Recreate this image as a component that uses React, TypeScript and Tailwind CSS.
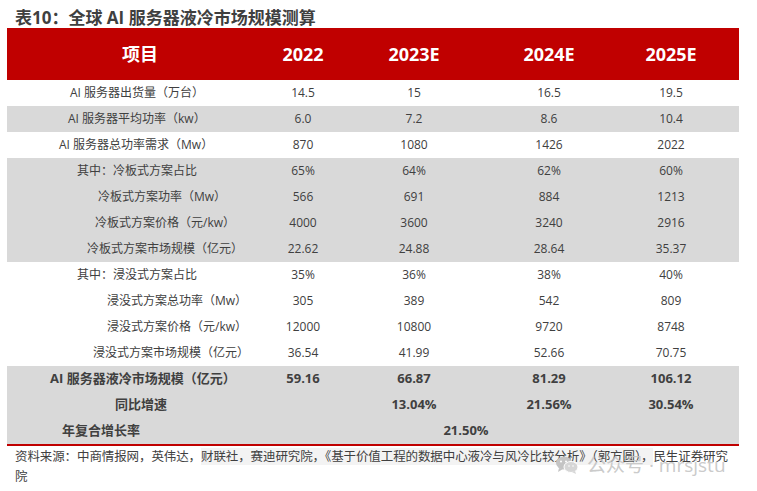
const rows: { label: string; pl: string; vals: string[]; bg: boolean; bold?: boolean }[] = [
  { label: "AI 服务器出货量（万台）", pl: "pl-[63px]", vals: ["14.5", "15", "16.5", "19.5"], bg: false },
  { label: "AI 服务器平均功率（kw）", pl: "pl-[61px]", vals: ["6.0", "7.2", "8.6", "10.4"], bg: true },
  { label: "AI 服务器总功率需求（Mw）", pl: "pl-[52px]", vals: ["870", "1080", "1426", "2022"], bg: false },
  { label: "其中：冷板式方案占比", pl: "pl-[70px]", vals: ["65%", "64%", "62%", "60%"], bg: true },
  { label: "冷板式方案功率（Mw）", pl: "pl-[91px]", vals: ["566", "691", "884", "1213"], bg: true },
  { label: "冷板式方案价格（元/kw）", pl: "pl-[88px]", vals: ["4000", "3600", "3240", "2916"], bg: true },
  { label: "冷板式方案市场规模（亿元）", pl: "pl-[80px]", vals: ["22.62", "24.88", "28.64", "35.37"], bg: true },
  { label: "其中：浸没式方案占比", pl: "pl-[70px]", vals: ["35%", "36%", "38%", "40%"], bg: false },
  { label: "浸没式方案总功率（Mw）", pl: "pl-[100px]", vals: ["305", "389", "542", "809"], bg: false },
  { label: "浸没式方案价格（元/kw）", pl: "pl-[100px]", vals: ["12000", "10800", "9720", "8748"], bg: false },
  { label: "浸没式方案市场规模（亿元）", pl: "pl-[86px]", vals: ["36.54", "41.99", "52.66", "70.75"], bg: false },
  { label: "AI 服务器液冷市场规模（亿元）", pl: "pl-[43px]", vals: ["59.16", "66.87", "81.29", "106.12"], bg: true, bold: true },
  { label: "同比增速", pl: "pl-[108px]", vals: ["", "13.04%", "21.56%", "30.54%"], bg: true, bold: true },
];

function WeChatIcon() {
  return (
    <svg width="24" height="20" viewBox="0 0 24 20" fill="none">
      <ellipse cx="9" cy="8" rx="8" ry="6.5" fill="#c4c4c4" />
      <path d="M4 13 L3 17 L8 14 Z" fill="#c4c4c4" />
      <ellipse cx="16" cy="12" rx="7" ry="5.5" fill="#d6d6d6" stroke="#fff" strokeWidth="1" />
      <path d="M20 16 L21 19 L17 17 Z" fill="#d6d6d6" />
      <circle cx="6" cy="6.5" r="1" fill="#fff" />
      <circle cx="11" cy="6.5" r="1" fill="#fff" />
      <circle cx="14" cy="11" r="0.8" fill="#fff" />
      <circle cx="18" cy="11" r="0.8" fill="#fff" />
    </svg>
  );
}

export default function App() {
  return (
    <div
      className="relative w-[757px] h-[491px] bg-white text-[#404040]"
      style={{ fontFamily: '"Open Sans", "Noto Sans CJK SC", sans-serif' }}
    >
      <div className="h-[28px] pt-[7px] pl-[15px] flex items-center text-[17px] font-bold text-[#3f3f3f] leading-none whitespace-nowrap">
        表10：全球 AI 服务器液冷市场规模测算
      </div>

      <div className="ml-[7px] w-[732px]">
        <div className="grid grid-cols-[266px_60px_162px_108px_136px] h-[52px] bg-[#c00000] text-white text-[18px] font-bold items-center text-center">
          <div>项目</div>
          <div>2022</div>
          <div>2023E</div>
          <div>2024E</div>
          <div>2025E</div>
        </div>

        {rows.map((r, i) => (
          <div
            key={i}
            className={`grid grid-cols-[266px_60px_162px_108px_136px] h-[26px] items-center whitespace-nowrap ${
              r.bg ? "bg-[#d9d9d9]" : "bg-white"
            } ${r.bold ? "text-[13px] font-bold" : "text-[12px]"}`}
          >
            <div className={`${r.pl} text-left`}>{r.label}</div>
            {r.vals.map((v, j) => (
              <div key={j} className="text-center">
                {v}
              </div>
            ))}
          </div>
        ))}

        <div className="grid grid-cols-[266px_60px_270px_136px] h-[26px] items-center bg-[#d9d9d9] text-[13px] font-bold whitespace-nowrap">
          <div className="pl-[55px]">年复合增长率</div>
          <div />
          <div className="text-center pr-[4px]">21.50%</div>
          <div />
        </div>

        <div className="h-[2px] bg-[#c00000]" />
      </div>

      <div className="pl-[15px] pt-[1px] text-[12.5px] leading-[20px] text-[#404040]">
        <div className="whitespace-nowrap tracking-[-0.1px]">
          资料来源：中商情报网，英伟达，
          <span className="bg-[#f3f3f3]">财联社，赛迪研究院，《基于价值工程的数据中心液冷与风冷比较分析》（郭方圆），</span>
          民生证券研究
        </div>
        <div>院</div>
      </div>

      <div className="absolute left-[555px] top-[455px] flex items-center gap-[8px] text-[19px] text-[#c4c4c4]/90 leading-none pointer-events-none">
        <WeChatIcon />
        <span>公众号 · mrsjstu</span>
      </div>
    </div>
  );
}
